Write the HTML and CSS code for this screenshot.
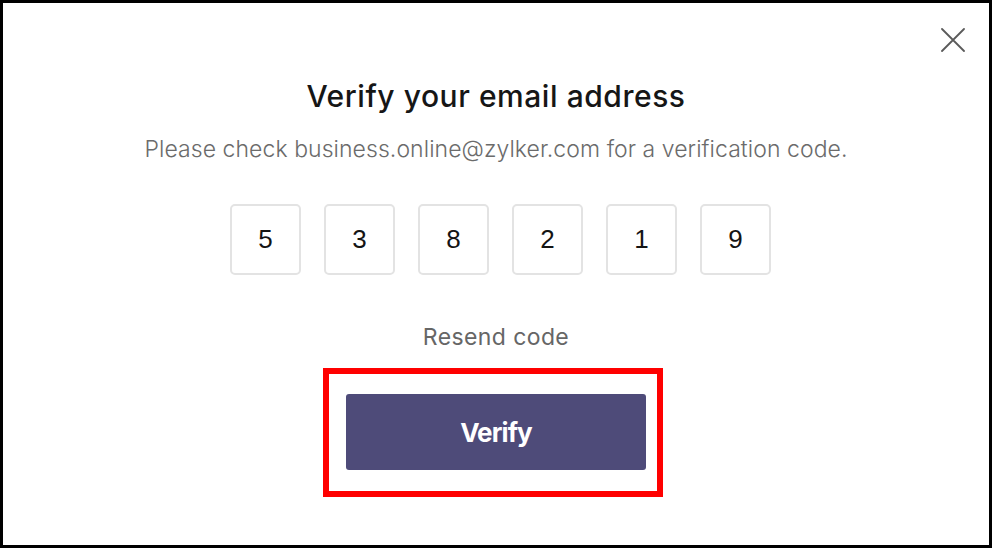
FILE: index.html
```html
<!DOCTYPE html>
<html lang="en">
<head>
<meta charset="utf-8">
<title>Verify your email address</title>
<link rel="stylesheet" href="styles.css">
</head>
<body>
<div class="frame">
  <button class="close" aria-label="Close">
    <svg width="24" height="24" viewBox="0 0 24 24" fill="none" stroke="#5a5a5a" stroke-width="1.8" stroke-linecap="round">
      <path d="M1 1L23 23M23 1L1 23"/>
    </svg>
  </button>
  <h1 class="title">Verify your email address</h1>
  <p class="subtitle">Please check business.online@zylker.com for a verification code.</p>
  <div class="otp">
    <div class="digit">5</div>
    <div class="digit">3</div>
    <div class="digit">8</div>
    <div class="digit">2</div>
    <div class="digit">1</div>
    <div class="digit">9</div>
  </div>
  <div class="resend">Resend code</div>
  <div class="actions">
    <div class="btn-wrap">
      <button class="verify">Verify</button>
      <span class="highlight"></span>
    </div>
  </div>
</div>
</body>
</html>
```

FILE: styles.css
```css
html, body {
  margin: 0;
  padding: 0;
  background: #ffffff;
}

.frame {
  position: relative;
  box-sizing: border-box;
  width: 992px;
  height: 548px;
  border: 3px solid #000000;
  background: #ffffff;
  padding-top: 75px;
  display: flex;
  flex-direction: column;
  align-items: center;
  font-family: Inter, "Noto Sans", sans-serif;
}

.close {
  position: absolute;
  top: 25px;
  right: 24px;
  width: 24px;
  height: 24px;
  padding: 0;
  border: 0;
  background: transparent;
  display: flex;
}

.title {
  margin: 0;
  font-size: 30px;
  line-height: 36px;
  font-weight: 500;
  color: #161616;
  letter-spacing: 0.55px;
}

.subtitle {
  margin: 21px 0 0;
  font-size: 23px;
  line-height: 28px;
  font-weight: 300;
  color: #6b6b6b;
  letter-spacing: 0.06px;
}

.otp {
  margin-top: 41px;
  padding-left: 9px;
  display: flex;
  gap: 23px;
}

.digit {
  box-sizing: border-box;
  width: 71px;
  height: 71px;
  border: 2px solid #e3e3e3;
  border-radius: 5px;
  display: flex;
  align-items: center;
  justify-content: center;
  font-family: "Liberation Sans", Arial, sans-serif;
  font-size: 26px;
  color: #141414;
}

.resend {
  margin-top: 47px;
  font-size: 23px;
  line-height: 30px;
  font-weight: 400;
  color: #666666;
  letter-spacing: 0.4px;
}

.actions {
  margin-top: 42px;
  display: flex;
  justify-content: center;
}

.btn-wrap {
  position: relative;
}

.verify {
  display: block;
  width: 300px;
  height: 76px;
  border: 0;
  border-radius: 3px;
  background: #4e4b79;
  color: #ffffff;
  font-family: Inter, "Noto Sans", sans-serif;
  font-size: 26px;
  font-weight: 700;
  letter-spacing: -0.9px;
  padding: 0;
}

.highlight {
  position: absolute;
  left: -23px;
  top: -26px;
  right: -17px;
  bottom: -27px;
  border: 6px solid #ff0000;
  pointer-events: none;
}
```
